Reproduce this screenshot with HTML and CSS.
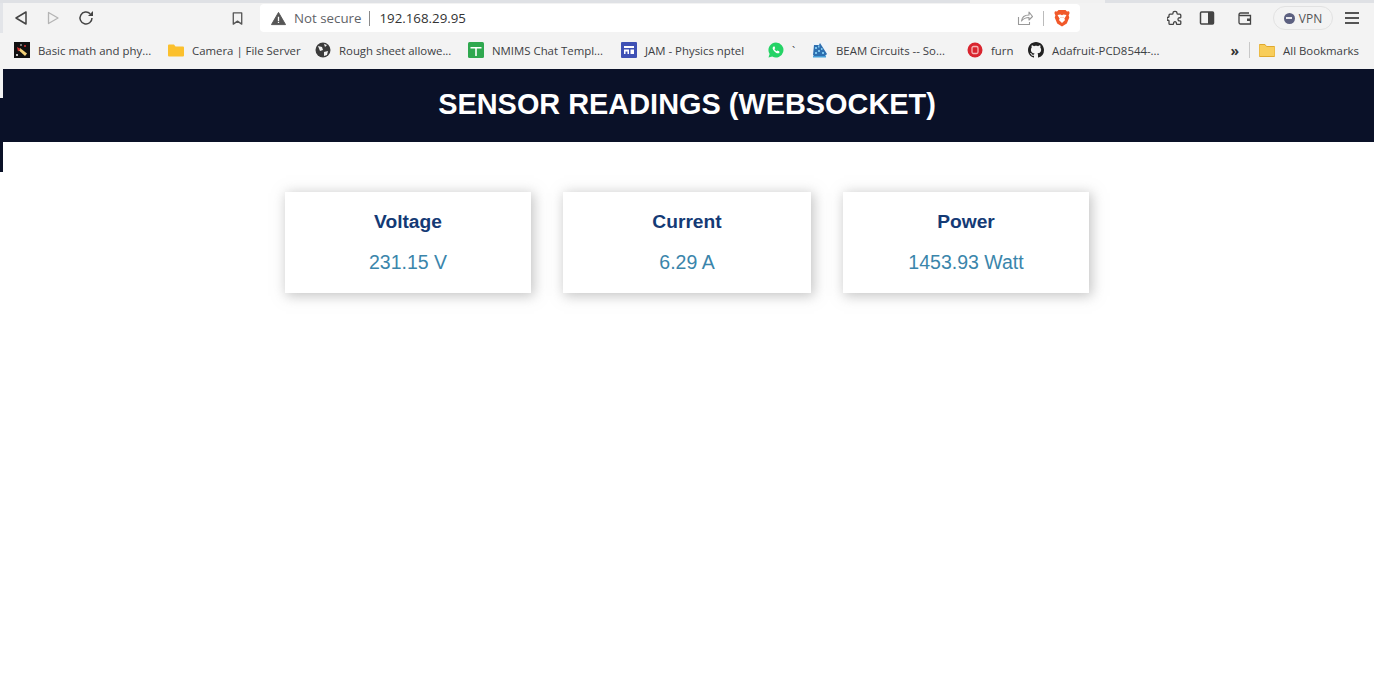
FILE: index.html
```html
<!DOCTYPE html>
<html lang="en">
<head>
  <meta charset="UTF-8" />
  <title>Sensor Readings</title>
  <link rel="stylesheet" href="styles.css">
</head>
<body>
  <div class="window">
    <div class="tabstrip"></div>

    <div class="toolbar">
      <div class="nav-buttons">
        <svg class="nav-icon" viewBox="0 0 16 16"><path d="M13 2v12L3 8z" fill="none" stroke="#444" stroke-width="1.5" stroke-linejoin="round"/></svg>
        <svg class="nav-icon" viewBox="0 0 16 16"><path d="M3.500 2.500v11L13 8z" fill="none" stroke="#b4b4b4" stroke-width="1.3" stroke-linejoin="round"/></svg>
        <svg class="nav-icon reload" viewBox="0 0 16 16"><path d="M14 8a6 6 0 1 1-1.800-4.300" fill="none" stroke="#444" stroke-width="1.500"/><path d="M15 1v5h-5z" fill="#444"/></svg>
      </div>
      <svg class="bookmark-icon" viewBox="0 0 16 16"><path d="M3.500 2h9v12L8 10.800 3.500 14z" fill="none" stroke="#555" stroke-width="1.400" stroke-linejoin="round"/></svg>
      <div class="omnibox">
        <svg class="warn-icon" viewBox="0 0 16 16"><path d="M8 1.500 15.500 14.500H.5z" fill="#555" stroke="#555" stroke-linejoin="round"/><path d="M7.300 6h1.400v4.600H7.300zM7.300 11.400h1.400v1.400H7.300z" fill="#fff"/></svg>
        <span class="not-secure">Not secure</span>
        <span class="url">192.168.29.95</span>
        <svg class="share-icon" viewBox="0 0 16 16"><path d="M1.500 7v7.500h11V12M4.500 11c.5-4 3.500-6 7.500-6V2l3.500 4.500L12 10V7.500c-3 0-5.500 1-7.500 3.500z" fill="none" stroke="#999" stroke-width="1.100" stroke-linejoin="round"/></svg>
        <span class="omni-sep"></span>
        <svg class="brave-icon" viewBox="0 0 16 18"><path d="M4.500 1h7L13 2.500l2-.2.600 1.700-1 2.500.7 2-2.500 6L8 17.500 3.200 14.500.7 8.500l.7-2-1-2.500L1 2.300l2 .2z" fill="#f1592a"/><path d="M3.500 6 6.500 5.500 8 6.300 9.500 5.500l3 .5-2.200 3.700.8 1.300L8 14 4.900 11l.8-1.300z" fill="#fff"/><path d="M6.500 8h1l-.5 1zM8.500 8h1l-.5 1z" fill="#f1592a"/></svg>
      </div>
      <div class="toolbar-right">
        <svg class="ext-icon puzzle" viewBox="0 0 16 16"><path d="M6 3.200C6 .8 10 .8 10 3.200c0 .6.400 1 1 1h1.800c.6 0 1 .4 1 1V7c0 .6-.5.900-1 .8-2.400-.4-2.400 3.400 0 3 .5-.1 1 .2 1 .8v1.800c0 .6-.4 1-1 1h-2.600c-.6 0-.8-.5-.8-1 .3-2.200-3.100-2.200-2.800 0 0 .5-.2 1-.8 1H3c-.6 0-1-.4-1-1v-2.500c0-.6-.5-.8-1-.7C-.2 11-.2 7 1 7.200c.5.100 1-.1 1-.7V5.200c0-.6.400-1 1-1h2c.6 0 1-.4 1-1z" fill="none" stroke="#444" stroke-width="1.300" stroke-linejoin="round"/></svg>
        <svg class="ext-icon" viewBox="0 0 16 16"><rect x="1.500" y="2" width="13" height="12" rx="1" fill="none" stroke="#444" stroke-width="1.500"/><rect x="9" y="2" width="5.500" height="12" fill="#444"/></svg>
        <svg class="ext-icon wallet" viewBox="0 0 16 16"><path d="M2 4.500A1.500 1.500 0 0 1 3.500 3H12M2 4.500v8A1.500 1.500 0 0 0 3.500 14h10V5.500H3.500A1.500 1.500 0 0 1 2 4.500z" fill="none" stroke="#444" stroke-width="1.300"/><rect x="10" y="8.500" width="3.500" height="2.500" fill="#444"/></svg>
        <div class="vpn-pill"><span class="vpn-dot"></span>VPN</div>
        <div class="menu-icon"><span></span><span></span><span></span></div>
      </div>
    </div>

    <div class="bookmarks">
      <div class="bookmark"><svg class="fav" viewBox="0 0 16 16"><rect width="16" height="16" fill="#111"/><path d="M6 6l7 5.500-2 2.500-6-5.500z" fill="#f3d27a"/><path d="M3 5l3.500 2-2.500 2.500z" fill="#d33"/><circle cx="11" cy="4" r="1" fill="#d33"/><circle cx="3" cy="13" r="1" fill="#fff"/><circle cx="7" cy="3" r=".8" fill="#fff"/></svg>Basic math and phy...</div>
      <div class="bookmark"><svg class="fav" viewBox="0 0 16 16"><path d="M0 3.500q0-1 1-1h5l1.500 2H15q1 0 1 1v8q0 1-1 1H1q-1 0-1-1z" fill="#fbc02d"/></svg>Camera | File Server</div>
      <div class="bookmark"><svg class="fav" viewBox="0 0 16 16"><circle cx="8" cy="8" r="7.500" fill="#3c3c3c"/><path d="M3 4l4 1 1 3-3 1zM9 10l4-1-1 4-3 1zM9 2l3 1-2 2z" fill="#f2f2f2"/></svg>Rough sheet allowe...</div>
      <div class="bookmark"><svg class="fav" viewBox="0 0 16 16"><rect width="16" height="16" rx="1.500" fill="#2fa84f"/><path d="M2.500 5h11v1.500H8.800V14H7.200V6.500H2.500z" fill="#fff"/></svg>NMIMS Chat Templ...</div>
      <div class="bookmark"><svg class="fav" viewBox="0 0 16 16"><rect width="16" height="16" rx="1" fill="#3f51b5"/><path d="M3 4h10v2H3zM3 7.500h5V12H3zM9.500 7.500H13V12H9.500z" fill="#fff"/><path d="M4.500 9.500h2V12h-2z" fill="#3f51b5"/></svg>JAM - Physics nptel</div>
      <div class="bookmark"><svg class="fav" viewBox="0 0 16 16"><path d="M8 .5a7.500 7.500 0 0 0-6.400 11.400L.5 15.500l3.700-1A7.500 7.500 0 1 0 8 .5z" fill="#25d366"/><path d="M5.500 4.500c-1.500 1-1 3 1 5s4 2.500 5 1l-.3-1.200-1.800-.8-.8.800c-1-.4-1.800-1.200-2.200-2.200l.8-.8-.6-1.800z" fill="#fff"/></svg>`</div>
      <div class="bookmark"><svg class="fav" viewBox="0 0 16 16"><rect width="16" height="16" fill="#f0f4f8"/><path d="M1 13 2 3h5l1-2 7 11-2 2H2z" fill="#2d6fb0"/><path d="M3 5h2v2H3zM6 8h2v2H6zM9 6h1.500v2H9zM3 10h2v2H3zM10 10h2v2h-2zM6 3.500h1.500v2H6z" fill="#7cc4ec"/><path d="M1 14h13v1.500H1z" fill="#45a0d8"/></svg>BEAM Circuits -- So...</div>
      <div class="bookmark"><svg class="fav" viewBox="0 0 16 16"><circle cx="8" cy="8" r="7.500" fill="#d9252f"/><rect x="5" y="4.500" width="6" height="7" rx="1.500" fill="none" stroke="#f6b5b5" stroke-width="1.300"/></svg>furn</div>
      <div class="bookmark"><svg class="fav" viewBox="0 0 16 16"><path fill="#222" d="M8 0C3.580 0 0 3.580 0 8c0 3.540 2.290 6.530 5.470 7.590.4.070.55-.17.55-.38 0-.19-.01-.82-.01-1.490-2.010.37-2.530-.49-2.690-.94-.09-.23-.48-.94-.82-1.130-.28-.15-.68-.52-.01-.53.630-.01 1.080.58 1.230.82.720 1.210 1.870.87 2.330.66.070-.52.280-.87.510-1.070-1.780-.2-3.640-.89-3.640-3.950 0-.87.310-1.590.820-2.150-.08-.2-.36-1.020.08-2.120 0 0 .67-.21 2.200.82.640-.18 1.320-.27 2-.27s1.360.09 2 .27c1.530-1.040 2.200-.82 2.200-.82.440 1.100.16 1.920.08 2.120.51.560.82 1.270.82 2.150 0 3.070-1.870 3.750-3.650 3.950.29.250.54.730.54 1.480 0 1.070-.01 1.930-.01 2.200 0 .21.150.460.550.380A8.010 8.010 0 0 0 16 8c0-4.420-3.580-8-8-8z"/></svg>Adafruit-PCD8544-...</div>
      <div class="bookmarks-end">
        <span class="more">»</span>
        <span class="bar-sep"></span>
        <div class="bookmark"><svg class="fav" viewBox="0 0 16 16"><path d="M0 3.500q0-1 1-1h5l1.500 2H15q1 0 1 1v8q0 1-1 1H1q-1 0-1-1z" fill="#f8cd5a" stroke="#e0a92e"/></svg>All Bookmarks</div>
      </div>
    </div>

    <div class="page">
      <span class="stray stray-top"></span>
      <span class="stray stray-bottom"></span>
      <div class="topnav"><h1>SENSOR READINGS (WEBSOCKET)</h1></div>
      <div class="content">
        <div class="cards">
          <div class="card"><p class="card-title">Voltage</p><p class="reading">231.15 V</p></div>
          <div class="card"><p class="card-title">Current</p><p class="reading">6.29 A</p></div>
          <div class="card"><p class="card-title">Power</p><p class="reading">1453.93 Watt</p></div>
        </div>
      </div>
    </div>
  </div>
</body>
</html>
```

FILE: styles.css
```css
html, body {
  margin: 0;
  height: 100%;
  background: #ffffff;
  overflow: hidden;
}
body {
  font-family: "Open Sans", "Noto Sans", sans-serif;
}
.window {
  width: 1374px;
  height: 687px;
  display: flex;
  flex-direction: column;
}
.tabstrip {
  height: 3px;
  background: linear-gradient(to right, #dfe1e5 970px, #f1f1f1 970px, #f1f1f1 1105px, #dfe1e5 1105px);
}
.toolbar {
  height: 30px;
  box-sizing: border-box;
  background: #f3f3f3;
  border-left: 3px solid #e3e5e9;
  display: flex;
  align-items: center;
  padding-left: 10px;
}
.nav-buttons {
  display: flex;
  gap: 16px;
  width: 217px;
}
.nav-icon {
  width: 16px;
  height: 16px;
}
.nav-icon.reload {
  margin-left: 1px;
}
.bookmark-icon {
  width: 15px;
  height: 15px;
  margin-right: 15px;
}
.omnibox {
  width: 820px;
  height: 28px;
  box-sizing: border-box;
  background: #ffffff;
  border-radius: 4px;
  display: flex;
  align-items: center;
  padding: 0 10px 0 11px;
  font-size: 13.3px;
}
.warn-icon {
  width: 15px;
  height: 15px;
  margin-right: 8px;
}
.not-secure {
  color: #5f6368;
  padding-right: 8px;
  border-right: 1px solid #8a8a8a;
  line-height: 15px;
}
.url {
  color: #333;
  margin-left: 9px;
  flex: 1;
}
.share-icon {
  width: 16px;
  height: 16px;
}
.omni-sep {
  width: 1px;
  height: 15px;
  background: #bbb;
  margin: 0 10px;
}
.brave-icon {
  width: 16px;
  height: 18px;
}
.toolbar-right {
  display: flex;
  align-items: center;
  margin-left: 87px;
}
.ext-icon {
  width: 16px;
  height: 16px;
  margin-right: 22px;
}
.ext-icon.puzzle {
  margin-right: 16px;
}
.ext-icon.wallet {
  margin-right: 20px;
}
.vpn-pill {
  width: 60px;
  height: 24px;
  box-sizing: border-box;
  border: 1px solid #e2e2e2;
  border-radius: 12px;
  display: flex;
  align-items: center;
  justify-content: center;
  gap: 4px;
  font-size: 12px;
  color: #555;
}
.vpn-dot {
  width: 11px;
  height: 11px;
  border-radius: 50%;
  background: #5c6080;
  display: flex;
  align-items: center;
  justify-content: center;
}
.vpn-dot::after {
  content: "";
  width: 6px;
  height: 2px;
  background: #e8e8ee;
}
.menu-icon {
  margin-left: 12px;
  width: 14px;
  display: flex;
  flex-direction: column;
  gap: 3px;
}
.menu-icon span {
  height: 2px;
  background: #555;
}
.bookmarks {
  height: 36px;
  box-sizing: border-box;
  padding: 0 0 2px 14px;
  background: #f3f3f3;
  display: grid;
  grid-template-columns: 154px 147px 153px 153px 147px 44px 155px 61px 1fr auto;
  align-items: center;
  font-size: 11.4px;
  color: #3c4043;
}
.bookmark {
  display: flex;
  align-items: center;
  gap: 8px;
  white-space: nowrap;
}
.fav {
  width: 16px;
  height: 16px;
}
.bookmarks-end {
  padding-right: 15px;
  display: flex;
  align-items: center;
  gap: 9px;
}
.more {
  font-weight: bold;
  font-size: 14px;
  color: #333;
  margin-right: 1px;
}
.bar-sep {
  width: 1px;
  height: 16px;
  background: #c8c8c8;
}
.page {
  flex: 1;
  position: relative;
  font-family: "Liberation Sans", Arial, sans-serif;
}
.stray {
  position: absolute;
  left: 0;
  width: 3px;
}
.stray-top {
  top: 0;
  height: 29px;
  background: #f3f3f3;
}
.stray-bottom {
  top: 73px;
  height: 30px;
  background: #0a1128;
}
.topnav {
  height: 73px;
  box-sizing: border-box;
  padding-bottom: 2px;
  background: #0a1128;
  display: flex;
  align-items: center;
  justify-content: center;
}
.topnav h1 {
  margin: 0;
  color: #ffffff;
  font-size: 28.9px;
  font-weight: bold;
}
.content {
  padding: 50px 0 0;
}
.cards {
  display: grid;
  grid-template-columns: 246px 248px 246px;
  gap: 32px;
  justify-content: center;
}
.card {
  background: #ffffff;
  height: 101px;
  box-shadow: 2px 2px 12px 1px rgba(140, 140, 140, .5);
  text-align: center;
  display: flex;
  flex-direction: column;
  align-items: center;
}
.card-title {
  margin: 19px 0 0;
  font-size: 19.2px;
  font-weight: bold;
  color: #143a75;
}
.reading {
  margin: 18px 0 0;
  font-size: 19.5px;
  color: #3a85ab;
}
```
